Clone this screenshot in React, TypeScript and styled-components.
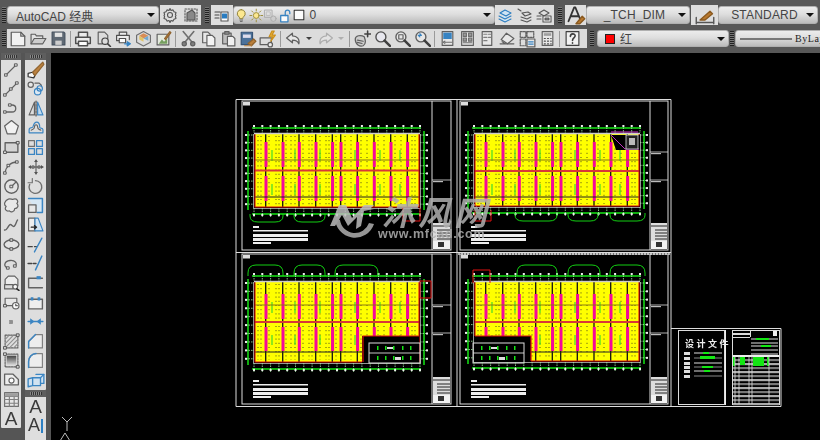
import React from "react";
import styled, { createGlobalStyle } from "styled-components";

const Global = createGlobalStyle`
  html, body { margin: 0; padding: 0; background: #000; overflow: hidden; }
  #root { width: 820px; height: 440px; }
`;
const Page = styled.div`
  width: 820px; height: 440px; display: flex; flex-direction: column; overflow: hidden;
  background: #5a5a5a; font-family: "Liberation Sans", "Noto Sans CJK SC", sans-serif;
`;
const TopBar = styled.div`
  height: 53px; flex: none; background: #585858; display: flex; flex-direction: column;
  padding-top: 5px; box-sizing: border-box; gap: 4px;
`;
const Row = styled.div<{ $h?: number }>`display: flex; height: ${p => p.$h ?? 20}px; align-items: stretch; flex: none; white-space: nowrap;`;
const Grip = styled.div<{ $l?: number; $r?: number }>`
  width: 4px; flex: none; margin: 2px ${p => p.$r ?? 1}px 2px ${p => p.$l ?? 2}px;
  background: repeating-linear-gradient(0deg, #222 0 1px, #777 1px 2px);
`;
const Combo = styled.div<{ $w: number; $pl?: number }>`
  width: ${p => p.$w}px; flex: none; box-sizing: border-box; position: relative; display: flex; align-items: center;
  background: linear-gradient(#ececec, #dedede 45%, #bcbcbc); border: 1px solid #b0b0b0; border-radius: 3px;
  font-size: 12px; color: #444; padding-left: ${p => p.$pl ?? 7}px; margin: 1px 0;
`;
const Caret = styled.span`
  position: absolute; right: 3px; top: 6px; width: 0; height: 0;
  border-left: 4px solid transparent; border-right: 4px solid transparent; border-top: 4px solid #111;
`;
const CenterText = styled.span`flex: 1; text-align: center; padding-right: 14px; font-size: 12px; color: #444; letter-spacing: 0.2px;`;
const IconPanel = styled.div<{ $w: number; $ml?: number }>`
  width: ${p => p.$w}px; flex: none; margin-left: ${p => p.$ml ?? 0}px; box-sizing: border-box;
  background: #dedede; display: flex; align-items: center; justify-content: space-around;
`;
const Strip = styled.div<{ $w: number }>`
  width: ${p => p.$w}px; flex: none; background: #dcdcdc; display: flex; align-items: center; padding-left: 1px; box-sizing: border-box;
`;
const Btn = styled.span<{ $w?: number }>`
  width: ${p => p.$w ?? 20}px; flex: none; display: flex; align-items: center; justify-content: center; opacity: .92;
`;
const Sep = styled.span`width: 1px; height: 16px; background: #9a9a9a; margin: 0 2px; flex: none;`;
const SmallCaret = styled.span<{ $c?: string }>`
  width: 0; height: 0; border-left: 3px solid transparent; border-right: 3px solid transparent;
  border-top: 3px solid ${p => p.$c ?? "#333"};
`;
const Swatch = styled.span`width: 8px; height: 8px; background: #f00; border: 1px solid #222; margin-right: 5px; flex: none;`;
const LayerZero = styled.span`font-size: 12px; color: #444; margin-left: 3px;`;
const LineSample = styled.span`width: 52px; height: 2px; background: #777; margin: 0 3px 0 -3px; flex: none;`;
const SerifLabel = styled.span`font-family: "Liberation Serif", serif; font-size: 10px; color: #222; letter-spacing: 0.6px;`;
const Main = styled.div`flex: 1; display: flex; min-height: 0;`;
const Sidebar = styled.div`
  width: 51px; flex: none; display: flex; gap: 4px; padding-left: 1px; box-sizing: border-box; background: #555;
`;
const SideCol = styled.div`width: 20px; flex: none; display: flex; flex-direction: column;`;
const SideColWide = styled(SideCol)`width: 21px;`;
const SideGrip = styled.div`
  height: 7px; flex: none; background: #5e5e5e; display: flex; justify-content: center; align-items: center;
  &::after { content: ""; width: 12px; height: 3px; background: repeating-linear-gradient(90deg, #888 0 1px, #333 1px 2px); }
`;
const SideList = styled.div`background: #dedede; display: flex; flex-direction: column; flex: none; border-radius: 0 0 1px 1px;`;
const SideBtn = styled.div`height: 19.4px; display: flex; align-items: center; justify-content: center; flex: none; opacity: .9;`;
const BigA = styled.span`font-size: 19px; line-height: 19px; color: #2a2a2a;`;
const AiWrap = styled.span`display: flex; align-items: center; font-size: 18px; line-height: 19px; color: #2a2a2a;`;
const Cursor = styled.span`width: 2px; height: 14px; background: #1a76c2; margin-left: 1px;`;
const Canvas = styled.div`flex: 1; background: #000; overflow: hidden;`;
const Draw = styled.svg`display: block; filter: blur(0.3px);`;

const Ic: React.FC<{ children: React.ReactNode; s?: number }> = ({ children, s = 16 }) => (
  <svg width={s} height={s} viewBox="0 0 16 16" fill="none" stroke="#555" strokeWidth="1.1" strokeLinejoin="round" strokeLinecap="round">{children}</svg>
);
const B = "#2a7cc0";

const top = {
  gear: <Ic><circle cx="8" cy="8" r="2.5"/><path d="M8 1.5l1 2 2-.6 1 1.9 2 .7-.6 2 .6 1-.6 1 .6 2-2 .7-1 1.900-2-.6-1 2-1-2-2 .6-1-1.900-2-.7.6-2-.6-1 .6-1-.6-2 2-.7 1-1.900 2 .6z"/></Ic>,
  work: <Ic><path d="M2 2h12v12H2z" strokeDasharray="1.500 1.500"/><path d="M4 13V6l5-3 3 3v7z" fill="#888"/></Ic>,
  layers: <Ic><path d="M1 5h5M1 8h4M1 11h4" stroke="#444"/><path d="M7 5h7v9H7z" stroke="#555" fill="#fff"/><path d="M8.500 7h4v4h-4z" fill={B} stroke={B}/></Ic>,
  bulb: <Ic s={15}><path d="M8 1.500a4.400 4.400 0 0 0-2.500 8c.7.6.8 1.300.8 2h3.400c0-.7.1-1.400.8-2A4.400 4.400 0 0 0 8 1.500z" fill="#ffe98a" stroke="#8a7a30"/><path d="M6.500 13h3M7 14.600h2" stroke="#666"/></Ic>,
  sun: <Ic s={15}><circle cx="8" cy="8" r="3.200" fill="#ffe98a" stroke="#9a8a30"/><path d="M8 1v2M8 13v2M1 8h2M13 8h2M3 3l1.400 1.400M11.600 11.600L13 13M3 13l1.400-1.400M11.600 4.400L13 3" stroke="#9a8a30"/></Ic>,
  greyPc: <Ic s={15}><path d="M2 2h8v8H2z" stroke="#aaa"/><path d="M4 4h4v4H4z" stroke="#bbb"/><circle cx="11.500" cy="11.500" r="3" stroke="#aaa" fill="#ccc"/></Ic>,
  lock: <Ic s={15}><path d="M3 8h8v7H3z" fill="#fff" stroke={B} strokeWidth="1.400"/><path d="M8 8V4.500a2.500 2.500 0 0 1 5 0V6" stroke={B} strokeWidth="1.400"/></Ic>,
  square: <Ic s={14}><path d="M2.500 2.500h11v11h-11z" fill="#fff" stroke="#222" strokeWidth="1.200"/></Ic>,
  l1: <Ic><path d="M3 6l5-3 6 3-5 3zM2 9l6 3 6-3M2 12l6 3 6-3" stroke={B} fill="#cfe3f3"/></Ic>,
  l2: <Ic><path d="M2 2l3 2M6 6l6-1 3 2-6 2zM5 10l6 2 4-2M5 13l6 2 4-2" stroke="#555"/></Ic>,
  l3: <Ic><path d="M3 6l5-3 5 3-5 3zM1 9h4M1 12h4"/><path d="M7 9h8v6H7z" fill="#fff"/><path d="M9 11h4v2H9z" fill="#888"/></Ic>,
  txt: <Ic s={20}><path d="M2 13L6.500 2h1L12 13M4 9h6" stroke="#333" strokeWidth="1.500"/><path d="M8 15l5-6 2 2-4 4z" fill="#b9792f" stroke="#8a5a20"/></Ic>,
  dim: <Ic s={20}><path d="M1 14h14M1 10v5M15 10v5" stroke="#555"/><path d="M4 12l8-7 2 2-6 5z" fill="#b9792f" stroke="#8a5a20"/></Ic>,
  doc: <Ic s={18}><path d="M2 2h8.500L14 5.500V14H2z" fill="#f4f4f4"/><path d="M10.500 2v3.500H14"/></Ic>,
  open: <Ic s={17}><path d="M1 13V4h4l1 1.500h6V8" fill="#e4e4e4"/><path d="M1 13l3-5h11l-3 5z" fill="#ccc"/></Ic>,
  save: <Ic s={17}><path d="M2 2h11l1 1v11H2z" fill="#55606c" stroke="#3a4654"/><path d="M4.500 2.500h7v4h-7z" fill="#e4e4e4" stroke="none"/><path d="M5 10h6v4H5z" fill="#ccc" stroke="none"/></Ic>,
  print: <Ic s={18}><path d="M4 6V2h8v4M4 12H1.500V6.500h13V12H12" stroke="#444" fill="#eee" strokeWidth="1.300"/><path d="M4 10h8v4H4z" fill="#fff" stroke="#444" strokeWidth="1.300"/></Ic>,
  preview: <Ic s={17}><path d="M3 2h6l3 3v3M3 2v11h4"/><circle cx="9.500" cy="10.500" r="3" stroke="#333"/><path d="M12 13l2.500 2.500" stroke="#333" strokeWidth="1.500"/></Ic>,
  plot: <Ic s={17}><path d="M4 5V2h7v3M4 10H1.500V5h12v4" stroke="#444" fill="#eee"/><path d="M4 8h6v4H4z" fill="#fff" stroke="#444"/><path d="M9 13h4M11.500 11l3 2-3 2z" stroke={B} fill={B}/></Ic>,
  cube: <Ic s={17}><path d="M8 1.500L14.500 5v6.500L8 15l-6.500-3.500V5z" stroke="#666" fill="#ddd"/><path d="M8 3l4.500 2.500L8 8 4 5.500z" fill="#d8874a" stroke="none"/><path d="M8 8l4.500-2.500V10z" fill="#6aa5cf" stroke="none"/><path d="M4 5.500L8 8v3L4 9z" fill="#e2c25c" stroke="none"/></Ic>,
  publish: <Ic s={17}><path d="M2 4h11v10H2z" fill="#e6ebe0"/><path d="M3.500 13l3-4 2 2 3-3v5z" fill="#6d9a55" stroke="none"/><path d="M9 8l5-6.500 1 1L10 9z" fill="#b9792f" stroke="#8a5a20"/></Ic>,
  cut: <Ic s={17}><path d="M3 1.500l8 9.500M13 1.500l-8 9.500" stroke="#666" strokeWidth="1.500"/><circle cx="4" cy="13" r="2" fill="#777"/><circle cx="12" cy="13" r="2" fill="#777"/></Ic>,
  copy: <Ic s={17}><path d="M2.500 2h5l2 2v8h-7z" fill="#e8e8e8"/><path d="M6.500 5h5l2.500 2.500V15h-7.500z" fill="#f6f6f6"/></Ic>,
  paste: <Ic s={17}><path d="M2.500 3h8v10h-8z" fill="#bbb"/><path d="M4.500 1.500h4v2.500h-4z" fill="#888"/><path d="M7 6h5l2 2v7H7z" fill="#f2f2f2"/></Ic>,
  match: <Ic s={18}><path d="M2 2h10v11H2z" fill="#3f6a96" stroke="#2a4a70"/><path d="M3.500 4h7v3h-7z" fill="#dde" stroke="none"/><path d="M8 12l5-4 2 2-4 4z" fill="#b9792f" stroke="#8a5a20"/><path d="M5 14h6" stroke="#b9792f"/></Ic>,
  sheetset: <Ic s={18}><path d="M1 7h10v6H1z"/><circle cx="10" cy="13" r="2" fill="#eee"/><path d="M11.500 1L9 6h3l-1.500 4 4-5.500h-3L13.500 1z" fill="#f2b52c" stroke="#c98a10"/></Ic>,
  undo: <Ic s={17}><path d="M7 3L1.500 7.500 7 12V9.500c3 0 5 1 6 3.500 1-4-1.500-7.500-6-7.500z" fill="#e8e8e8" stroke="#555" strokeWidth="1.200"/></Ic>,
  redo: <Ic s={17}><path d="M9 3l5.500 4.500L9 12V9.500c-3 0-5 1-6 3.500-1-4 1.500-7.500 6-7.500z" fill="#e4e4e4" stroke="#aaa" strokeWidth="1.200"/></Ic>,
  pan: <Ic s={18}><path d="M2 8c0-3 5-4 8-2 1 3 2 6-1 8-3 1-7-1-7-6z" fill="#ccc"/><path d="M4 9l5 1M4 11l4 1"/><path d="M13 1v5M10.500 3.500h5" stroke="#333" strokeWidth="1.400"/></Ic>,
  zoom: <Ic s={17}><circle cx="6.500" cy="6.500" r="4.700" fill="#e8e8f0" stroke="#444" strokeWidth="1.300"/><path d="M10 10l5 5" stroke="#333" strokeWidth="2.400"/></Ic>,
  zoomw: <Ic s={17}><circle cx="6.500" cy="6.500" r="4.700" fill="#e8e8e8" stroke="#555" strokeWidth="1.300"/><path d="M4.500 4.500h4v4h-4z"/><path d="M10 10l5 5" stroke="#333" strokeWidth="2.400"/></Ic>,
  zoomp: <Ic s={17}><circle cx="6.500" cy="6.500" r="4.700" fill="#e8e8e8" stroke="#555" strokeWidth="1.300"/><path d="M4 5h3l-1.500-1.500M4 5l1.500 1.500" stroke={B}/><path d="M10 10l5 5" stroke="#333" strokeWidth="2.400"/></Ic>,
  props: <Ic s={17}><path d="M3 1.500h10v13H3z" fill="#e8e8e8"/><path d="M4 2.500h8v6H4z" fill={B} stroke="none"/><path d="M6 11.500h6M4 11.500l1.500-1M4 11.500l1.500 1" stroke="#666"/></Ic>,
  design: <Ic s={17}><path d="M2.500 1.500h11v13h-11z" fill="#e8e8e8"/><path d="M4 3h3v3H4zM9 3h3v3H9zM4 7.500h3v3H4zM9 7.500h3v3H9zM4 12h8" stroke="#666" fill="#999"/></Ic>,
  tool: <Ic s={17}><path d="M3 1.500h9v13H3z" fill="#e8e8e8"/><path d="M4.500 4h3M4.500 7h3M4.500 10h3M9 4h2M9 7h2" stroke="#777"/></Ic>,
  sheet: <Ic s={17}><path d="M2 9l5-6 7 5-6 5z" fill="#e8e8e8"/><path d="M1 13h13M3 11l3 2"/></Ic>,
  markup: <Ic s={18}><path d="M2 1.500h5v5H2zM8 1.500h6v5H8zM2 8h5v6H2z" strokeDasharray="1.500 1"/><path d="M8 8h7v7H8z" fill="#e8e8e8"/><path d="M9.500 10.500h4M9.500 12.500h4" stroke={B}/></Ic>,
  calc: <Ic s={17}><path d="M3 1.500h10v13H3z" fill="#e8e8e8"/><path d="M4.500 3h7v2.500h-7z" fill="#999" stroke="none"/><path d="M5 8h1M8 8h1M11 8h.5M5 10.500h1M8 10.500h1M11 10.500h.5M5 13h1M8 13h1M11 13h.5" stroke="#444"/></Ic>,
  help: <Ic s={17}><path d="M2 1.500h12v13H2z" fill="#f4f4f4" stroke="#333"/><path d="M6 6c0-3 4.500-3 4.500-.5C10.500 7.500 8 7.500 8 9.800M8 12v.5" stroke="#333" strokeWidth="1.500"/></Ic>,
};

const sq = (x: number, y: number) => <path d={`M${x - 1.2} ${y - 1.2}h2.400v2.400h-2.400z`} fill="#ddd" stroke="#444" strokeWidth=".9"/>;
const leftIcons = [
  <Ic><path d="M3 13L13 3"/>{sq(3,13)}{sq(13,3)}</Ic>,
  <Ic><path d="M2 14L14 2"/>{sq(2,14)}{sq(8,8)}{sq(14,2)}</Ic>,
  <Ic><path d="M2 12h7c5 0 5-7 0-7H7" strokeWidth="1.300"/>{sq(2,12)}{sq(7,5)}</Ic>,
  <Ic s={17}><path d="M8 1.500l6.500 5-2.500 7.500H4L1.500 6.500z" fill="#f4f4f4" strokeWidth="1.200"/></Ic>,
  <Ic s={17}><path d="M2 3.500h12v9H2z" fill="#d4d4d4" strokeWidth="1.300"/>{sq(2,12.500)}{sq(14,3.500)}</Ic>,
  <Ic><path d="M2 14C3 7 8 3 14 3" strokeWidth="1.300"/>{sq(2,14)}{sq(14,3)}{sq(5.500,6.500)}</Ic>,
  <Ic s={17}><circle cx="8" cy="8" r="6.300" fill="#e4e4e4" strokeWidth="1.300"/><path d="M8 8l4-4"/>{sq(8,8)}</Ic>,
  <Ic s={17}><path d="M5 2c2-1 4 1 5 0 3-1 5 2 3 4 2 2 1 5-2 5 0 3-4 4-5 2-3 1-5-2-3-4-3-2-1-6 2-7z" fill="#eaeaea" strokeWidth="1.100"/></Ic>,
  <Ic><path d="M1.500 13c2 1 3-3 5-5s3 3 5 1c1.500-1.500 2-5 3-6" strokeWidth="1.400"/></Ic>,
  <Ic s={17}><ellipse cx="8" cy="8" rx="7" ry="4.200" fill="#e4e4e4" strokeWidth="1.300"/>{sq(8,3.800)}{sq(8,12.200)}</Ic>,
  <Ic><path d="M5 12C0 11 1 5 7 4.500c5-.5 8 3 5 6" strokeWidth="1.300"/>{sq(5,12)}{sq(12,10)}</Ic>,
  <Ic s={17}><path d="M5 2h6l3 3v6H2V5z" fill="#eee"/><path d="M1.500 10h8v4h-8z" fill="#ddd"/><circle cx="11.500" cy="12" r="2.200" fill="#fff"/><path d="M13 14l2 1.500" stroke="#111" strokeWidth="1.400"/></Ic>,
  <Ic s={17}><path d="M2 4h11v7H2z" fill="#e8e8e8"/><circle cx="12" cy="11" r="3" fill="#fff"/>{sq(2,11)}<path d="M12 9.500V11h1.500"/></Ic>,
  <Ic s={8}><path d="M5 5h6v6H5z" fill="#888" stroke="#666"/></Ic>,
  <Ic s={17}><path d="M2 2h12v12H2z" strokeDasharray="1.600 1"/><path d="M3 13L13 3M3 9l6-6M7 13l6-6M3 5l2-2M11 13l2-2" stroke="#888"/>{sq(2,14)}{sq(14,2)}</Ic>,
  <Ic s={17}><path d="M2 2h12v12H2z" strokeDasharray="1.600 1"/><defs><linearGradient id="gr" x1="0" y1="0" x2="0" y2="1"><stop offset="0" stopColor="#333"/><stop offset="1" stopColor="#ddd"/></linearGradient></defs><path d="M3.500 3.500h9v9h-9z" fill="url(#gr)" stroke="none"/>{sq(2,2)}{sq(14,14)}</Ic>,
  <Ic s={17}><path d="M1.500 3h8l5 5v5h-13z" fill="#efefef" strokeWidth="1.200"/><circle cx="8" cy="9" r="2.400" fill="#fff"/></Ic>,
  <Ic s={17}><path d="M1.500 1.500h13v13h-13z" fill="#e8e8e8" stroke="#666"/><path d="M1.500 5h13M1.500 8h13M1.500 11.500h13M6 5v9.500M10.500 5v9.500" stroke="#777"/><path d="M2 2h12v3H2z" fill="#999" stroke="none"/></Ic>,
];
const rightIcons = [
  <Ic s={18}><path d="M1 11l4-1 2 3-1 2-5-1z" fill="#fff" stroke="#222"/><path d="M5 10l9-9 1 2-8 10z" fill="#b9792f" stroke="#8a5a20"/></Ic>,
  <Ic s={17}><circle cx="3.500" cy="3.500" r="2.500" fill="#e8e8e8"/><path d="M7.500 2h4l2 2v1"/><circle cx="10" cy="10" r="3" stroke={B} fill="#dcebf7"/><circle cx="12" cy="7" r="2.500" stroke={B}/></Ic>,
  <Ic s={17}><path d="M7 2v12H2z" fill="#ddd" stroke="#555"/><path d="M8.500 1v14" stroke="#333" strokeDasharray="2 1"/><path d="M10 2v12h5z" fill="#bcdaf2" stroke={B}/></Ic>,
  <Ic s={17}><path d="M2 10c0-2 2-2 3-2s1-5 4-5 3 4 3 5 3 0 3 2v3H2z" stroke={B} strokeWidth="1.100"/><path d="M4 10.500c1-1 3-.5 3-3s3-3 3 0 2 2 3 3" stroke="#555"/></Ic>,
  <Ic s={17}><path d="M1.500 1.500h5.500v5.500H1.500z" stroke="#666"/><path d="M9 1.500h5.500v5.500H9zM1.500 9h5.500v5.500H1.500zM9 9h5.500v5.500H9z" stroke={B} strokeWidth="1.200"/></Ic>,
  <Ic s={16}><path d="M8 1v14M1 8h14" stroke="#444"/><path d="M8 .5l2 2.500H6zM8 15.500l2-2.500H6zM.5 8L3 6v4zM15.500 8L13 6v4z" fill="#444" stroke="none"/><circle cx="5" cy="8" r="1.300" fill="#888"/><circle cx="11" cy="8" r="1.300" fill="#888"/></Ic>,
  <Ic s={17}><path d="M8 2.500a6 6 0 1 1-5.500 3.500" strokeWidth="1.300" stroke="#666"/><path d="M5 .5v4H1" stroke="#666"/></Ic>,
  <Ic s={17}><path d="M1.500 1.500h13v13h-5" stroke={B} fill="#d7e8f6" strokeWidth="1.400"/><path d="M1.500 7.500h7v7h-7z" fill="#e8e8e8" stroke="#555" strokeWidth="1.200"/></Ic>,
  <Ic s={17}><path d="M1.500 2h6v12h-6z" fill="#f0f0f0"/><path d="M7.500 2h3L15 14H7.500z" fill="#cfe3f4" stroke={B}/><path d="M4 10.500h5M7 9l2 1.500L7 12" stroke="#111" strokeWidth="1.200"/></Ic>,
  <Ic s={17}><path d="M1 10h4M7 10h2" stroke="#333"/><path d="M14 2L7 15" stroke={B} strokeWidth="1.300"/></Ic>,
  <Ic s={17}><path d="M1 8h3.500M6 8h2.500" stroke="#333" strokeWidth="1.300"/><path d="M14 1L8 14" stroke={B} strokeWidth="1.400"/></Ic>,
  <Ic s={17}><path d="M1.500 4h13M1.500 4v9h13" stroke="#555" strokeWidth="1.300"/><path d="M9 2h4v3H9z" fill={B} stroke="none"/></Ic>,
  <Ic s={17}><path d="M1.500 5h13v9h-13z" stroke="#555" fill="#f0f0f0" strokeWidth="1.300"/><path d="M3.500 3h2.500v3H3.500zM10 3h2.500v3H10z" fill={B} stroke="none"/></Ic>,
  <Ic s={17}><path d="M1 8h14" stroke={B} strokeWidth="1.200"/><path d="M3 5l4 3-4 3zM13 5L9 8l4 3z" fill={B} stroke="none"/></Ic>,
  <Ic s={17}><path d="M1.500 14V8L8 1.500h6.500V14z" fill="#efefef" stroke="#777"/><path d="M1.500 14V8L8 1.500" stroke={B} strokeWidth="1.300"/></Ic>,
  <Ic s={17}><path d="M1.500 14.500V9c0-4 3-7.500 7-7.500h6v13z" fill="#efefef" stroke="#777"/><path d="M1.500 14.500V9c0-4 3-7.500 7-7.500" stroke={B} strokeWidth="1.400"/></Ic>,
  <Ic s={18}><path d="M1 7l4-1v7l-4 1zM5 6h7v7H5zM8 3h7v8h-3" stroke={B} strokeWidth="1.200" fill="#cfe3f4"/><path d="M12 6l3-3" stroke={B}/></Ic>,
];

const BAYS = [10.7, 27.7, 44, 60.7, 77.3, 85.7, 102.3, 119, 135.7, 152.3];
const W = 164;
const GREEN = "#14e614";
const DOTS = [3, 6, 14, 21, 24, 31, 36, 40, 48, 54, 57, 65, 71, 74, 81, 90, 96, 106, 112, 123, 129, 140, 146, 157, 160];
type PlanProps = {
  x: number; y: number; h: number;
  bars: [number, number, number, number];
  lines: [number, number, number];
  arcs: [number, number][];
  arcTop?: boolean; cut?: "left" | "right"; notch?: boolean;
};
const Plan: React.FC<PlanProps> = ({ x, y, h, bars, lines, arcs, arcTop, cut, notch }) => {
  const xs = Array.from({ length: 21 }, (_, i) => x - 1 + i * 8.3);
  const ys = Array.from({ length: 10 }, (_, i) => y + 1 + i * (h / 9.5));
  const cutX = cut === "right" ? x + 108 : x;
  const cutY = y + 54;
  const boxX = cut === "right" ? cutX + 6 : cutX - 2;
  return (
    <g>
      <rect x={x} y={y} width={W} height={h} fill="#ffff00"/>
      {DOTS.map(d => (
        <line key={d} x1={x + d} y1={y + 2} x2={x + d} y2={y + h - 2} stroke="#222" strokeWidth="1" strokeDasharray="1 3.200" opacity=".8"/>
      ))}
      {BAYS.map(b => (
        <g key={b}>
          <line x1={x + b} y1={y} x2={x + b} y2={y + h} stroke="#111" strokeWidth="1.300"/>
          <rect x={x + b - 1.2} y={y + bars[0]} width="3" height={bars[1] - bars[0]} fill="#f5089a"/>
          <rect x={x + b - 1.2} y={y + bars[2]} width="3" height={bars[3] - bars[2]} fill="#f5089a"/>
        </g>
      ))}
      {[17, 40, 65, 100, 125, 145].map(b => (
        <g key={b}>
          <line x1={x + b} y1={y + bars[0] + 8} x2={x + b} y2={y + bars[1] - 6} stroke="#30d830" strokeWidth="1.100"/>
          <line x1={x + b} y1={y + bars[2] + 8} x2={x + b} y2={y + bars[3] - 6} stroke="#30d830" strokeWidth="1.100"/>
        </g>
      ))}
      <line x1={x} y1={y + lines[0]} x2={x + W} y2={y + lines[0]} stroke="#8a7a10" strokeWidth="1"/>
      <line x1={x} y1={y + lines[1]} x2={x + W} y2={y + lines[1]} stroke="#d83838" strokeWidth="1.800"/>
      <line x1={x} y1={y + lines[2]} x2={x + W} y2={y + lines[2]} stroke="#222" strokeWidth="1"/>
      <path d={`M${x} ${y}V${y + h}H${x + W}V${y}`} fill="none" stroke="#e01010" strokeWidth="1.100"/>
      <line x1={x - 1} y1={y - 0.5} x2={x + W + 1} y2={y - 0.5} stroke="#ccc" strokeWidth="1.500"/>
      <path d={`M${x - 1.5} ${y}V${y + h + 1.5}H${x + W + 1.5}V${y}`} fill="none" stroke="#bbb" strokeWidth="0.8"/>
      {notch && (
        <g>
          <path d={`M${x + 136} ${y + 1}h29v15h-24z`} fill="#000"/>
          <path d={`M${x + 136} ${y + 1}l14 14h14`} stroke="#c030c0" fill="none"/>
          <rect x={x + 151} y={y + 1} width="12" height="14" fill="#222" stroke="#ddd" strokeWidth=".8"/>
          <rect x={x + 154} y={y + 4} width="6" height="7" fill="#bbb"/>
          <path d={`M${x + 136} ${y - 2}h27`} stroke="#d030d0" strokeWidth="1"/>
        </g>
      )}
      {cut && (
        <g>
          <rect x={cutX - 1} y={cutY} width="57" height={h - 53} fill="#000"/>
          <path d={cut === "right"
            ? `M${x + W} ${cutY}H${cutX}V${y + h}`
            : `M${x} ${cutY}H${cutX + 56}V${y + h}`} stroke="#e01010" fill="none" strokeWidth="1.200"/>
          <rect x={boxX} y={cutY + 7} width="51" height="20" fill="none" stroke="#ddd" strokeWidth="1"/>
          <line x1={boxX} y1={cutY + 17} x2={boxX + 51} y2={cutY + 17} stroke="#ddd" strokeWidth=".9"/>
          {[8, 16, 24, 33, 41].map(o => (
            <g key={o}>
              <rect x={boxX + o} y={cutY + 10} width="1.500" height="4" fill={GREEN}/>
              <rect x={boxX + o} y={cutY + 20} width="1.500" height="4" fill={GREEN}/>
            </g>
          ))}
          <rect x={boxX + 18} y={cutY + 11} width="6" height="2" fill="#ddd"/>
          <rect x={boxX + 26} y={cutY + 21} width="6" height="3" fill="#ddd"/>
        </g>
      )}
      <line x1={x - 3} y1={y - 6} x2={x + W + 2} y2={y - 6} stroke={GREEN} strokeWidth="1.500"/>
      <line x1={x - 3} y1={y + h + 7} x2={x + W + 2} y2={y + h + 7} stroke={GREEN} strokeWidth="1.500"/>
      <line x1={x - 7} y1={y - 3} x2={x - 7} y2={y + h + 3} stroke={GREEN} strokeWidth="1.500"/>
      <line x1={x + W + 5} y1={y - 3} x2={x + W + 5} y2={y + h + 3} stroke={GREEN} strokeWidth="1.500"/>
      {xs.map(v => (
        <g key={v}>
          <line x1={v} y1={y - 9} x2={v} y2={y - 1} stroke="#a8eca8" strokeWidth=".8" strokeDasharray="1.500 1"/>
          <rect x={v - 1} y={y - 9} width="2" height="2" fill="#eee"/>
          <line x1={v} y1={y + h + 1} x2={v} y2={y + h + 10} stroke="#a8eca8" strokeWidth=".8" strokeDasharray="1.500 1"/>
          <rect x={v - 1} y={y + h + 7} width="2" height="2" fill="#eee"/>
        </g>
      ))}
      {ys.map(v => (
        <g key={v}>
          <line x1={x - 9} y1={v} x2={x - 1} y2={v} stroke="#a8eca8" strokeWidth=".8" strokeDasharray="1.500 1"/>
          <rect x={x - 10} y={v - 1} width="2" height="2" fill="#eee"/>
          <line x1={x + W + 1} y1={v} x2={x + W + 8} y2={v} stroke="#a8eca8" strokeWidth=".8" strokeDasharray="1.500 1"/>
          <rect x={x + W + 7} y={v - 1} width="2" height="2" fill="#eee"/>
        </g>
      ))}
      {arcs.map(([a, b]) => arcTop
        ? <path key={a} d={`M${a} ${y - 6}v-3q0-8 8-8h${b - a - 16}q8 0 8 8v3`} stroke={GREEN} fill="none" strokeWidth=".9"/>
        : <path key={a} d={`M${a} ${y + h + 7}v2q0 6 8 6h${b - a - 16}q8 0 8-6v-2`} stroke={GREEN} fill="none" strokeWidth=".9"/>
      )}
    </g>
  );
};

const Sheet: React.FC<{ lx: number; rx: number; tb: number; top0: number; bot: number; rows: number[] }> = ({ lx, rx, tb, top0, bot, rows }) => (
  <g>
    <rect x={lx} y={top0} width={rx - lx} height={bot - top0} fill="none" stroke="#ddd" strokeWidth="1"/>
    <line x1={tb} y1={top0} x2={tb} y2={bot} stroke="#ddd" strokeWidth="1"/>
    {rows.map(r => (
      <g key={r}>
        <line x1={tb} y1={r} x2={rx} y2={r} stroke="#ddd" strokeWidth=".8"/>
        <rect x={tb + 1} y={r + 1} width="10" height="1.200" fill="#bbb"/>
      </g>
    ))}
    <rect x={tb + 1} y={bot - 27} width={rx - tb - 2} height="26" fill="#ddd"/>
    {[3, 7, 10, 13, 16].map(o => (
      <line key={o} x1={tb + (o > 6 ? 5 : 1)} x2={rx - 1} y1={bot - 27 + o} y2={bot - 27 + o} stroke="#111" strokeWidth=".9"/>
    ))}
    <rect x={tb + 1} y={bot - 9} width={rx - tb - 2} height="8" fill="#f2f2f2"/>
    <rect x={tb + 6} y={bot - 8} width="6" height="5" fill="#333"/>
    <rect x={lx + 1} y={top0 + 1} width="7" height="3.500" fill="#ddd"/>
    <rect x={lx + 11} y={bot - 24} width="6" height="2" fill="#eee"/>
    <rect x={lx + 11} y={bot - 20} width="55" height="1.500" fill="#eee"/>
    <rect x={lx + 11} y={bot - 16} width="55" height="3" fill="#eee"/>
    <rect x={lx + 11} y={bot - 12} width="55" height="3" fill="#eee"/>
    <rect x={lx + 11} y={bot - 8} width="18" height="2" fill="#eee"/>
  </g>
);

const Drawing: React.FC = () => (
  <Draw width="769" height="387" viewBox="51 53 769 387">
    <path d="M236 99.500H671V406.500H236zM457 99.500V406.500M236 252.500H671M671 328.500H781V406.500H671" fill="none" stroke="#ddd" strokeWidth="1"/>
    <line x1="458" y1="254" x2="671" y2="254" stroke="#ddd" strokeWidth="1.400" strokeDasharray="2 1"/>
    <Sheet lx={242} rx={451} tb={432} top0={101} bot={250} rows={[180]}/>
    <Sheet lx={460} rx={668} tb={650} top0={101} bot={250} rows={[152, 180]}/>
    <Sheet lx={242} rx={451} tb={432} top0={254} bot={404} rows={[305, 333]}/>
    <Sheet lx={460} rx={668} tb={650} top0={254} bot={404} rows={[305, 333]}/>
    <Plan x={255} y={134} h={73} bars={[8, 33, 42, 67]} lines={[26, 36.5, 63]} arcs={[[250, 283], [294, 325]]}/>
    <Plan x={475} y={134} h={72} bars={[8, 33, 42, 67]} lines={[26, 37, 63]} arcs={[[515, 557], [568, 598], [610, 645]]} notch/>
    <Plan x={255} y={282} h={80} bars={[12, 37, 45, 69]} lines={[23, 40, 70]} arcs={[[248, 283], [294, 325], [335, 378]]} arcTop cut="right"/>
    <Plan x={475} y={282} h={79} bars={[12, 37, 45, 69]} lines={[23, 40, 70]} arcs={[[517, 557], [568, 600], [610, 645]]} arcTop cut="left"/>
    <path d="M420 281h11v17h-11z" fill="none" stroke="#e01010"/>
    <path d="M473 283v-13h17v13" fill="none" stroke="#e01010"/>
    <path d="M403 208v13h17v-13" fill="none" stroke="#e01010"/>
    <path d="M475 210v11h16v-11" fill="none" stroke="#e01010"/>
    <rect x="678.500" y="330.500" width="46" height="74" fill="none" stroke="#ddd" strokeWidth="1"/>
    <line x1="725.500" y1="330" x2="725.500" y2="405" stroke="#eee"/>
    <text x="685" y="347" fill="#eee" fontFamily="'Noto Sans CJK SC', sans-serif" fontWeight="700" fontSize="9" letterSpacing="2.500">设计文件</text>
    {[353, 358, 363, 367, 371, 376].map((v, i) => (
      <g key={v}>
        <rect x="684" y={v - 1} width="6" height="3" fill="#ddd"/>
        <line x1="694" x2="722" y1={v} y2={v} stroke={i % 2 ? "#888" : "#ddd"} strokeWidth="1"/>
      </g>
    ))}
    <rect x="700" y="356" width="15" height="3" fill={GREEN}/>
    <rect x="703" y="352" width="6" height="2" fill={GREEN}/>
    <rect x="702" y="366" width="11" height="2" fill={GREEN}/>
    <rect x="704" y="370" width="6" height="2" fill={GREEN}/>
    <rect x="732.500" y="330.500" width="47" height="74" fill="none" stroke="#ddd" strokeWidth="1"/>
    <rect x="733" y="333" width="17" height="2" fill="#ddd"/>
    <line x1="733" x2="750" y1="337.500" y2="337.500" stroke="#ddd"/>
    <line x1="750.500" y1="330" x2="750.500" y2="337" stroke="#ddd"/>
    <rect x="773" y="331" width="4" height="5" fill="#eee"/>
    {[339, 343, 346, 350, 354].map(v => <line key={v} x1="751" x2="778" y1={v} y2={v} stroke="#ccc" strokeWidth="1.100"/>)}
    <rect x="756" y="338" width="13" height="2" fill={GREEN}/>
    <rect x="761" y="345" width="10" height="2" fill={GREEN}/>
    <rect x="733" y="355" width="46" height="2" fill="#eee"/>
    {[359, 363, 367, 371, 375, 379, 383, 387, 391, 395, 399, 403].map(v => (
      <rect key={v} x="733" y={v} width="46" height="2.200" fill={v % 8 === 7 ? "#777" : "#aaa"}/>
    ))}
    <rect x="733" y="357" width="2" height="9" fill={GREEN}/>
    <rect x="740" y="357" width="5" height="8" fill={GREEN}/>
    <rect x="753" y="357" width="11" height="9" fill={GREEN}/>
    <rect x="767" y="357" width="2" height="9" fill={GREEN}/>
    {[735, 739, 749, 752, 769].map(v => <line key={v} x1={v} x2={v} y1="356" y2="404" stroke="#ddd" strokeWidth=".8"/>)}
    <path d="M62 417l5 5 5-5M67 422v9" stroke="#bbb" strokeWidth="1" fill="none"/>
    <path d="M60 441l5-8 5 8" stroke="#bbb" strokeWidth="1" fill="none"/>
    <g opacity="0.85">
      <path d="M335 218a20 20 0 0 0 39 6l-5-1a15 15 0 0 1-29-3z" fill="#b0b0b0"/>
      <path d="M330 226l9-21 7 0 6 13 12-13 10 0-4 4h4l-10 2-3 15-5 3 1-12-9 9-6-11-7 11z" fill="#bcbcbc"/>
      <text x="382" y="225" fontFamily="'Noto Sans CJK SC', sans-serif" fontWeight="700" fontStyle="italic" fontSize="33" fill="#b0b0b0" letterSpacing="3">沐风网</text>
      <text x="378" y="238" fontFamily="'Liberation Sans', sans-serif" fontWeight="700" fontSize="12.500" fill="#b0b0b0" letterSpacing="0.700">www.mfcad.com</text>
    </g>
  </Draw>
);

export default function App() {
  return (
    <Page>
      <Global/>
      <TopBar>
        <Row>
          <Grip/>
          <Combo $w={152} $pl={8}>AutoCAD 经典<Caret/></Combo>
          <IconPanel $w={41} $ml={1}>{top.gear}{top.work}</IconPanel>
          <Grip $l={4} $r={2}/>
          <IconPanel $w={22}>{top.layers}</IconPanel>
          <Combo $w={262} $pl={0}>
            <Btn $w={14.5}>{top.bulb}</Btn><Btn $w={14.5}>{top.sun}</Btn><Btn $w={14.5}>{top.greyPc}</Btn><Btn $w={14.5}>{top.lock}</Btn><Btn $w={14.5}>{top.square}</Btn>
            <LayerZero>0</LayerZero><Caret/>
          </Combo>
          <IconPanel $w={59}>{top.l1}{top.l2}{top.l3}</IconPanel>
          <Grip $l={4} $r={3}/>
          <IconPanel $w={21}>{top.txt}</IconPanel>
          <Combo $w={104}><CenterText>_TCH_DIM</CenterText><Caret/></Combo>
          <IconPanel $w={27} $ml={1}>{top.dim}</IconPanel>
          <Combo $w={100}><CenterText>STANDARD</CenterText><Caret/></Combo>
        </Row>
        <Row $h={19}>
          <Grip/>
          <Strip $w={580}>
            <Btn>{top.doc}</Btn><Btn>{top.open}</Btn><Btn>{top.save}</Btn><Sep/>
            <Btn>{top.print}</Btn><Btn>{top.preview}</Btn><Btn>{top.plot}</Btn><Btn>{top.cube}</Btn><Btn>{top.publish}</Btn><Sep/>
            <Btn>{top.cut}</Btn><Btn>{top.copy}</Btn><Btn>{top.paste}</Btn><Btn>{top.match}</Btn><Btn>{top.sheetset}</Btn><Sep/>
            <Btn>{top.undo}</Btn><Btn $w={12}><SmallCaret/></Btn><Btn>{top.redo}</Btn><Btn $w={12}><SmallCaret $c="#aaa"/></Btn><Sep/>
            <Btn>{top.pan}</Btn><Btn>{top.zoom}</Btn><Btn>{top.zoomw}</Btn><Btn>{top.zoomp}</Btn><Sep/>
            <Btn>{top.props}</Btn><Btn>{top.design}</Btn><Btn>{top.tool}</Btn><Btn>{top.sheet}</Btn><Btn>{top.markup}</Btn><Btn>{top.calc}</Btn><Sep/>
            <Btn>{top.help}</Btn>
          </Strip>
          <Grip $l={3} $r={3}/>
          <Combo $w={132}><Swatch/>红<Caret/></Combo>
          <Grip $l={1} $r={1}/>
          <Combo $w={100}><LineSample/><SerifLabel>ByLayer</SerifLabel></Combo>
        </Row>
      </TopBar>
      <Main>
        <Sidebar>
          <SideCol>
            <SideGrip/>
            <SideList>{leftIcons.map((ic, i) => <SideBtn key={i}>{ic}</SideBtn>)}<SideBtn><BigA>A</BigA></SideBtn></SideList>
          </SideCol>
          <SideColWide>
            <SideGrip/>
            <SideList>{rightIcons.map((ic, i) => <SideBtn key={i}>{ic}</SideBtn>)}</SideList>
            <SideGrip/>
            <SideList><SideBtn><BigA>A</BigA></SideBtn><SideBtn><AiWrap>A<Cursor/></AiWrap></SideBtn><SideBtn/></SideList>
          </SideColWide>
        </Sidebar>
        <Canvas><Drawing/></Canvas>
      </Main>
    </Page>
  );
}
